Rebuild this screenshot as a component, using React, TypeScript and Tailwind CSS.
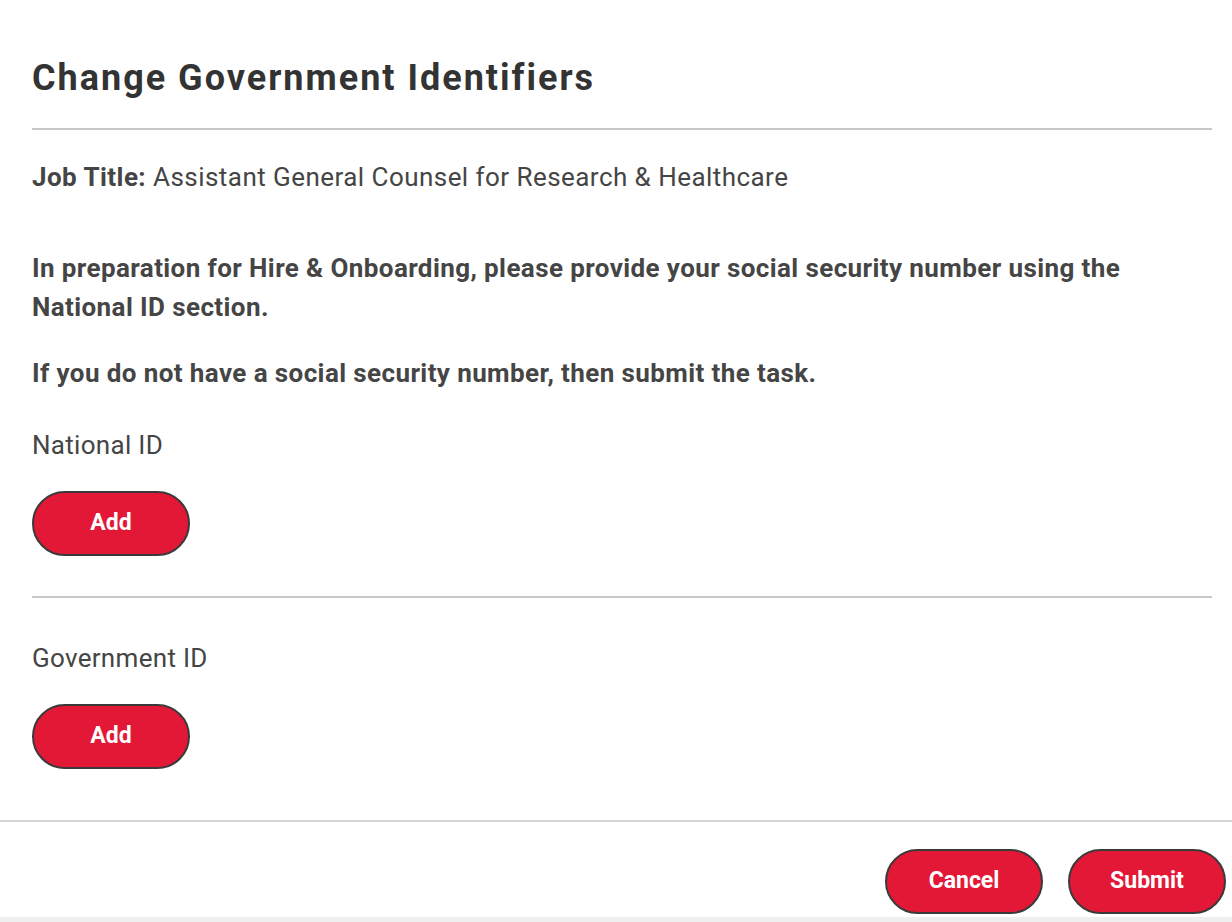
import React from "react";

function PillButton({ label, className = "" }: { label: string; className?: string }) {
  return (
    <button
      type="button"
      className={`h-[65px] w-[158px] shrink-0 rounded-full border-2 border-[#3a3a3a] bg-[#e31837] text-[23px] font-bold text-white ${className}`}
    >
      {label}
    </button>
  );
}

export default function App() {
  return (
    <div
      className="flex h-[922px] w-[1232px] flex-col overflow-hidden bg-white text-[#454545]"
      style={{ fontFamily: "Roboto, 'Liberation Sans', sans-serif" }}
    >
      <div className="flex flex-1 flex-col">
        <div className="flex flex-col items-start px-[32px] pr-[20px]">
          <h1 className="pt-[56px] text-[36px] font-bold leading-[44px] tracking-[2px] text-[#333333]">
            Change Government Identifiers
          </h1>
          <div className="mt-[28px] h-[2px] w-full bg-[#c8c8c8]" />
          <p className="mt-[28px] text-[26px] leading-[39px] tracking-[0.45px]">
            <span className="font-bold">Job Title:</span> Assistant General Counsel for Research &amp; Healthcare
          </p>
          <p className="mt-[52px] text-[26px] font-bold leading-[39px] tracking-[0.4px]">
            In preparation for Hire &amp; Onboarding, please provide your social security number using the National ID section.
          </p>
          <p className="mt-[27px] text-[26px] font-bold leading-[39px] tracking-[0.4px]">
            If you do not have a social security number, then submit the task.
          </p>
          <p className="mt-[33px] text-[26px] leading-[39px] tracking-[0.3px]">National ID</p>
          <PillButton label="Add" className="mt-[26px]" />
          <div className="mt-[40px] h-[2px] w-full bg-[#c8c8c8]" />
          <p className="mt-[41px] text-[26px] leading-[39px] tracking-[0.3px]">Government ID</p>
          <PillButton label="Add" className="mt-[26px]" />
        </div>
        <div className="mt-[51px] h-[2px] bg-[#d6d6d6]" />
        <div className="flex justify-end gap-[25px] pr-[6px] pt-[27px]">
          <PillButton label="Cancel" />
          <PillButton label="Submit" />
        </div>
      </div>
      <div className="h-[5px] bg-[#efefef]" />
    </div>
  );
}
